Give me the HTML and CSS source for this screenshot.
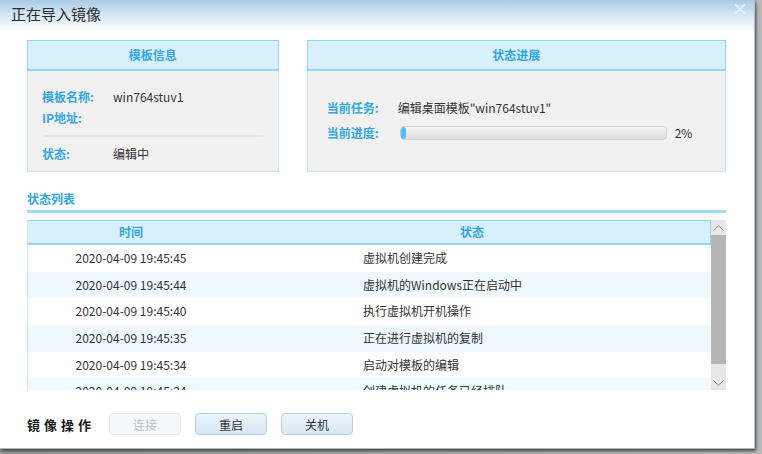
FILE: index.html
```html
<!DOCTYPE html>
<html>
  <head>
    <title>正在导入镜像</title>
    <meta charset='UTF-8'>
    <link rel="stylesheet" href="styles.css">
  </head>
  <body>
    <div class='dialog'>
      <div class='dialogHeader'>
        <span class='dialogTitle'>正在导入镜像</span>
        <svg class='closeIcon' width='10' height='10' viewBox='0 0 10 10'>
          <path d='M1 1 L9 9 M9 1 L1 9' stroke='#ffffff' stroke-width='2.2' stroke-linecap='round'/>
        </svg>
      </div>

      <div class='content'>
        <div class='panelRow'>
          <div class='panel infoPanel'>
            <div class='panelHead'>模板信息</div>
            <div class='panelBody'>
              <div class='field'><span class='label'>模板名称:</span><span class='value'>win764stuv1</span></div>
              <div class='field'><span class='label'>IP地址:</span><span class='value'></span></div>
              <div class='divider'></div>
              <div class='field stateField'><span class='label'>状态:</span><span class='value'>编辑中</span></div>
            </div>
          </div>

          <div class='panel progressPanel'>
            <div class='panelHead'>状态进展</div>
            <div class='panelBody'>
              <div class='field'><span class='label'>当前任务:</span><span class='value'>编辑桌面模板"win764stuv1"</span></div>
              <div class='field progressField'>
                <span class='label'>当前进度:</span>
                <div class='progressBar'><div class='progressFill' style='width: 2%'></div></div>
                <span class='percent'>2%</span>
              </div>
            </div>
          </div>
        </div>

        <div class='sectionTitle'>状态列表</div>

        <div class='listWrap'>
          <div class='list'>
            <div class='listHead'>
              <div class='colTime'>时间</div>
              <div class='colState headState'>状态</div>
            </div>
            <div class='listBody'>
              <div class='listRow'><div class='colTime'>2020-04-09 19:45:45</div><div class='colState'>虚拟机创建完成</div></div>
              <div class='listRow'><div class='colTime'>2020-04-09 19:45:44</div><div class='colState'>虚拟机的Windows正在启动中</div></div>
              <div class='listRow'><div class='colTime'>2020-04-09 19:45:40</div><div class='colState'>执行虚拟机开机操作</div></div>
              <div class='listRow'><div class='colTime'>2020-04-09 19:45:35</div><div class='colState'>正在进行虚拟机的复制</div></div>
              <div class='listRow'><div class='colTime'>2020-04-09 19:45:34</div><div class='colState'>启动对模板的编辑</div></div>
              <div class='listRow'><div class='colTime'>2020-04-09 19:45:34</div><div class='colState'>创建虚拟机的任务已经排队</div></div>
            </div>
          </div>
          <div class='scrollbar'>
            <div class='scrollBtn'>
              <svg width='11' height='6' viewBox='0 0 11 6'><path d='M0.5 5.5 L5.5 0.8 L10.5 5.5' fill='none' stroke='#8a8a8a' stroke-width='1'/></svg>
            </div>
            <div class='scrollThumb'></div>
            <div class='scrollTrack'></div>
            <div class='scrollBtn'>
              <svg width='11' height='6' viewBox='0 0 11 6'><path d='M0.5 0.5 L5.5 5.2 L10.5 0.5' fill='none' stroke='#8a8a8a' stroke-width='1'/></svg>
            </div>
          </div>
        </div>

        <div class='footer'>
          <span class='footerTitle'>镜像操作</span>
          <button class='actionButton' disabled>连接</button>
          <button class='actionButton'>重启</button>
          <button class='actionButton'>关机</button>
        </div>
      </div>
    </div>
  </body>
</html>
```

FILE: styles.css
```css
body {
  margin: 0;
  width: 762px;
  height: 454px;
  overflow: hidden;
  background: linear-gradient(90deg, #9a9a9a, #b9b9b9);
  font-family: "Noto Sans CJK SC", "Noto Sans", sans-serif;
  font-size: 12px;
  color: #333333;
}

.dialog {
  position: relative;
  width: 755px;
  height: 449px;
  background: #ffffff;
  border-right: 1px solid #a9bccb;
  border-bottom: 1px solid #a9bccb;
  box-sizing: border-box;
  box-shadow: 1px 2px 3px rgba(40, 40, 40, 0.8);
}

.dialogHeader {
  height: 32px;
  box-sizing: border-box;
  display: flex;
  align-items: center;
  justify-content: space-between;
  padding: 0 9px 4px 11px;
  background: linear-gradient(180deg, #a8cbe6 0%, #d3e6f4 45%, #ffffff 100%);
}

.dialogTitle {
  font-size: 15px;
  color: #2b2b2b;
  line-height: 20px;
}

.closeIcon {
  opacity: 0.55;
  margin-bottom: 10px;
}

.content {
  padding: 8px 28px 0 27px;
}

.panelRow {
  display: flex;
  gap: 28px;
}

.panel {
  height: 132px;
  box-sizing: border-box;
  border: 1px solid #d3e2ec;
  background: #f1f1f1;
}

.infoPanel {
  width: 252px;
}

.progressPanel {
  width: 420px;
}

.panelHead {
  height: 31px;
  margin: -1px -1px 0 -1px;
  box-sizing: border-box;
  border: 1px solid #8ed6f6;
  border-bottom-width: 2px;
  background: #d7f0fc;
  color: #33a6df;
  font-weight: bold;
  text-align: center;
  line-height: 28px;
}

.panelBody {
  padding: 15px 0 0 14px;
}

.progressPanel .panelBody {
  padding: 26px 0 0 19px;
}

.field {
  display: flex;
  align-items: center;
  height: 21px;
}

.label {
  width: 71px;
  flex: none;
  color: #33a6df;
  font-weight: bold;
}

.value {
  color: #333333;
}

.divider {
  height: 2px;
  margin: 7px 15px 6px 2px;
  background: #e6e6e6;
}

.progressField {
  margin-top: 4px;
}

.progressBar {
  width: 265px;
  height: 12px;
  margin-left: 2px;
  border: 1px solid #d2d2d2;
  border-radius: 4px;
  background: linear-gradient(180deg, #f4f4f4, #dcdcdc);
  overflow: hidden;
}

.progressFill {
  height: 100%;
  min-width: 5px;
  border-radius: 3px;
  background: #4dc1f6;
}

.percent {
  margin-left: 8px;
}

.sectionTitle {
  padding-top: 17px;
  line-height: 20px;
  padding-bottom: 1px;
  color: #33a6df;
  font-weight: bold;
  border-bottom: 3px solid #a3dcf5;
}

.listWrap {
  display: flex;
  margin-top: 7px;
  height: 170px;
}

.list {
  width: 685px;
  overflow: hidden;
  border-left: 1px solid #d6e6f1;
  box-sizing: border-box;
}

.listHead {
  display: flex;
  height: 25px;
  box-sizing: border-box;
  margin-left: -1px;
  border: 1px solid #8ed6f6;
  border-bottom-width: 2px;
  background: #d7f0fc;
  color: #33a6df;
  font-weight: bold;
  line-height: 22px;
}

.listRow {
  display: flex;
  height: 26.7px;
  line-height: 26px;
}

.listRow:nth-child(even) {
  background: #eff9ff;
}

.colTime {
  width: 206px;
  text-align: center;
}

.colState {
  flex: 1;
  padding-left: 129px;
}

.headState {
  padding-left: 0;
  text-align: center;
}

.scrollbar {
  width: 15px;
  display: flex;
  flex-direction: column;
  background: #e8e8e8;
}

.scrollBtn {
  height: 15px;
  display: flex;
  align-items: center;
  justify-content: center;
}

.scrollThumb {
  height: 129px;
  background: #b6b6b6;
}

.scrollTrack {
  flex: 1;
}

.footer {
  display: flex;
  align-items: center;
  gap: 14px;
  padding-top: 23px;
}

.footerTitle {
  font-size: 13px;
  font-weight: bold;
  letter-spacing: 4px;
  color: #1a1a1a;
  width: 68px;
}

.actionButton {
  width: 72px;
  height: 22px;
  padding: 0;
  font-family: inherit;
  font-size: 12px;
  color: #333333;
  background: linear-gradient(180deg, #ecf4fb, #d9e8f6);
  border: 1px solid #b5d1ea;
  border-radius: 4px;
}

.actionButton:disabled {
  color: #b9c3ca;
  background: #f3f8fc;
  border-color: #dfeaf3;
}
```
